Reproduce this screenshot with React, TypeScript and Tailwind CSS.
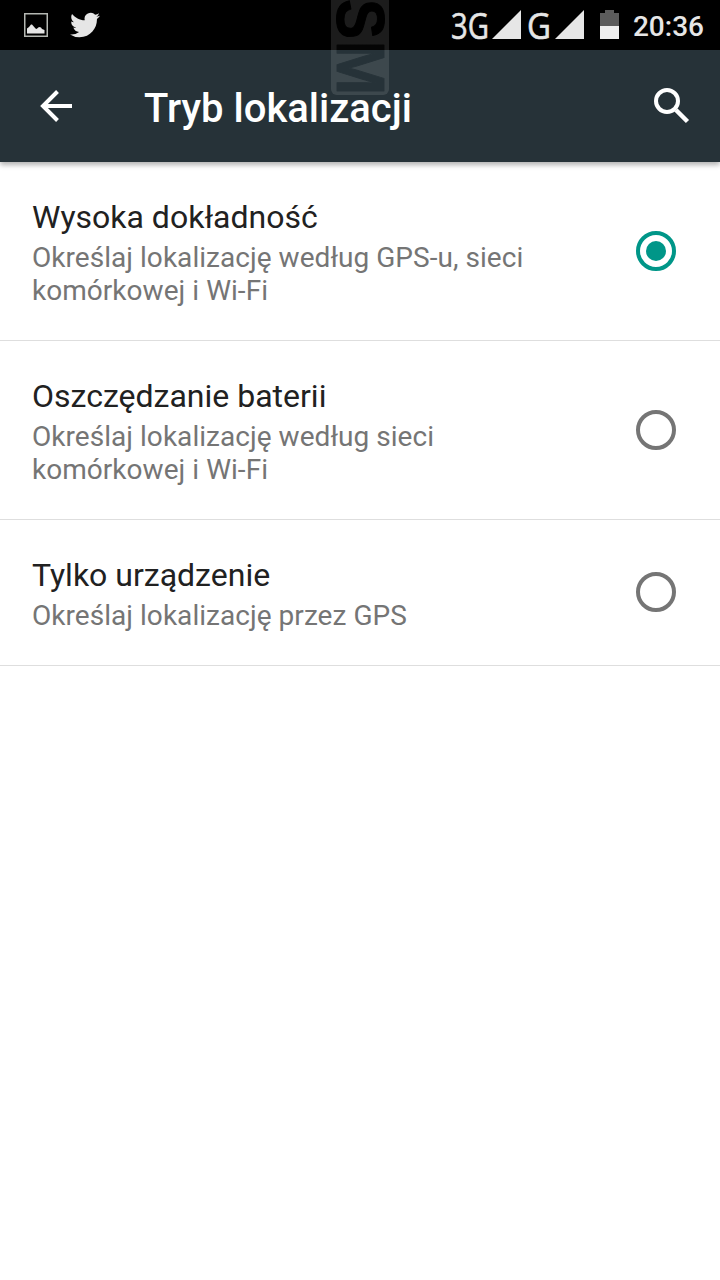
import { useState } from "react";

type LocationMode = {
  id: string;
  title: string;
  summary: string;
};

const modes: LocationMode[] = [
  {
    id: "high",
    title: "Wysoka dokładność",
    summary: "Określaj lokalizację według GPS-u, sieci komórkowej i Wi-Fi",
  },
  {
    id: "battery",
    title: "Oszczędzanie baterii",
    summary: "Określaj lokalizację według sieci komórkowej i Wi-Fi",
  },
  {
    id: "device",
    title: "Tylko urządzenie",
    summary: "Określaj lokalizację przez GPS",
  },
];

const PictureIcon = () => (
  <svg width="24" height="24" viewBox="0 0 24 24">
    <rect x="0.75" y="0.75" width="22.5" height="22.5" fill="none" stroke="#b4b7b2" strokeWidth="1.5" />
    <path d="M3 20.500V15.500l2-1.500 2-2.500h1l3.500 4 1 .500 2.500-2 2 .500 1 1.500 2.500 1v3.500z" fill="#e6e6e6" />
  </svg>
);

const TwitterIcon = () => (
  <svg width="30" height="30" viewBox="0 0 24 24" fill="#e6e6e6">
    <path d="M23.953 4.570a10 10 0 01-2.825.775 4.958 4.958 0 002.163-2.723c-.951.555-2.005.959-3.127 1.184a4.920 4.920 0 00-8.384 4.482C7.690 8.095 4.067 6.130 1.640 3.162a4.822 4.822 0 00-.666 2.475c0 1.710.870 3.213 2.188 4.096a4.904 4.904 0 01-2.228-.616v.060a4.923 4.923 0 003.946 4.827 4.996 4.996 0 01-2.212.085 4.936 4.936 0 004.604 3.417 9.867 9.867 0 01-6.102 2.105c-.390 0-.779-.023-1.170-.067a13.995 13.995 0 007.557 2.209c9.053 0 13.998-7.496 13.998-13.985 0-.210 0-.420-.015-.630A9.935 9.935 0 0024 4.590z" />
  </svg>
);

const SignalIcon = () => (
  <svg width="29" height="29" viewBox="0 0 29 29">
    <path d="M29 0v29H0z" fill="#e6e6e6" />
  </svg>
);

const BatteryIcon = () => (
  <svg width="19" height="29" viewBox="0 0 19 29">
    <path d="M5 0h9v3h5v13H0V3h5z" fill="#5c5c5c" />
    <path d="M0 16h19v13H0z" fill="#efefef" />
  </svg>
);

const NetworkLabel = ({ label, width }: { label: string; width: number }) => (
  <svg
    width={width}
    height="30"
    className="overflow-visible font-['Open_Sans',sans-serif] text-[36px]"
    fill="#e6e6e6"
    stroke="#e6e6e6"
    strokeWidth="0.6"
  >
    <text x="0" y="28.5" textLength={width} lengthAdjust="spacingAndGlyphs">
      {label}
    </text>
  </svg>
);

const StatusBar = () => (
  <div className="flex h-[50px] items-start bg-black">
    <div className="flex pt-[10px] pl-6">
      <div className="pt-[3px]">
        <PictureIcon />
      </div>
      <div className="pl-[22px]">
        <TwitterIcon />
      </div>
    </div>
    <div className="ml-auto flex items-start pt-[10px] pr-4">
      <NetworkLabel label="3G" width={38} />
      <div className="pl-[3px]">
        <SignalIcon />
      </div>
      <div className="pl-[6px]">
        <NetworkLabel label="G" width={24} />
      </div>
      <div className="pl-1">
        <SignalIcon />
      </div>
      <div className="pl-4">
        <BatteryIcon />
      </div>
      <span className="pl-[14px] text-[28px] leading-[34px] font-medium text-[#e6e6e6]">
        20:36
      </span>
    </div>
  </div>
);

const Watermark = () => (
  <svg
    className="absolute top-0 left-[331px] overflow-visible font-['Liberation_Sans',sans-serif] text-[68px] font-bold"
    width="58"
    height="95"
    viewBox="0 0 58 95"
  >
    <defs>
      {/* the letter takes the colour of the bar behind it */}
      <linearGradient id="bars" gradientUnits="userSpaceOnUse" x1="0" y1="0" x2="100" y2="0">
        <stop offset="0.5" stopColor="#050505" />
        <stop offset="0.5" stopColor="#263238" />
      </linearGradient>
    </defs>
    <path d="M0 0h58v89a6 6 0 0 1-6 6H6a6 6 0 0 1-6-6z" fill="#ffffff" fillOpacity="0.11" />
    <g transform="translate(6 0) rotate(90)" strokeWidth="1" strokeLinejoin="round">
      <text x="-1" y="0" textLength="40" lengthAdjust="spacingAndGlyphs" fill="#000000" stroke="#000000">
        S
      </text>
      <text x="40.5" y="0" textLength="55" lengthAdjust="spacingAndGlyphs" fill="url(#bars)" stroke="url(#bars)">
        M
      </text>
    </g>
  </svg>
);

const Header = () => (
  <header className="relative z-10 flex h-28 items-center bg-[#263238] pr-[30px] pl-10 shadow-[0_3px_5px_rgba(0,0,0,0.3)]">
    <button aria-label="Wstecz">
      <svg width="32" height="32" viewBox="0 0 32 32" fill="none" stroke="#ffffff" strokeWidth="4">
        <path d="M32 16H3M17.500 1.500L3 16l14.500 14.500" />
      </svg>
    </button>
    <h1 className="pt-[6px] pl-[72px] text-[40px] leading-[48px] font-medium text-white">
      Tryb lokalizacji
    </h1>
    <button aria-label="Szukaj" className="ml-auto">
      <svg width="36" height="36" viewBox="0 0 36 36" fill="none" stroke="#ffffff" strokeWidth="4">
        <circle cx="13" cy="13" r="11" />
        <path d="M22 22l11.500 11.500" strokeWidth="4.500" />
      </svg>
    </button>
  </header>
);

const Radio = ({ checked }: { checked: boolean }) => (
  <span
    className={
      checked
        ? "mb-px flex size-10 items-center justify-center rounded-full border-4 border-[#009688]"
        : "mb-px flex size-10 items-center justify-center rounded-full border-4 border-[#757575]"
    }
  >
    {checked && <span className="size-5 rounded-full bg-[#009688]" />}
  </span>
);

const App = () => {
  const [selected, setSelected] = useState("high");

  return (
    <div className="relative h-screen w-full overflow-hidden bg-white font-['Roboto',sans-serif]">
      <StatusBar />
      <Header />
      <ul>
        {modes.map((mode) => (
          <li key={mode.id} className="border-b border-[#dedede]">
            <button
              className="flex w-full items-center justify-between pr-11 pl-8 text-left"
              onClick={() => setSelected(mode.id)}
            >
              <div className="w-[520px] pt-9 pb-[33px]">
                <p className="text-[32px] leading-[38px] text-[#212121]">{mode.title}</p>
                <p className="pt-[5px] text-[28px] leading-[33px] tracking-[0.04px] text-[#757575]">
                  {mode.summary}
                </p>
              </div>
              <Radio checked={selected === mode.id} />
            </button>
          </li>
        ))}
      </ul>
      <div className="pointer-events-none absolute inset-x-0 top-0 z-20">
        <Watermark />
      </div>
    </div>
  );
};

export default App;
